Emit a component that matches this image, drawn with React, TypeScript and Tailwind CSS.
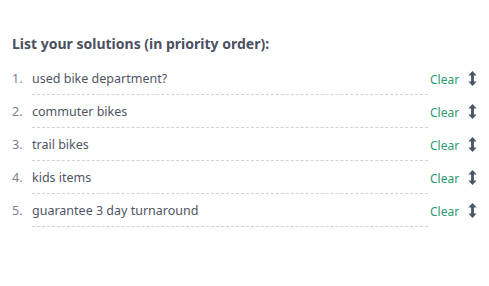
import React from "react";

const items = [
  "used bike department?",
  "commuter bikes",
  "trail bikes",
  "kids items",
  "guarantee 3 day turnaround",
];

function UpDown() {
  return (
    <svg width="9" height="15" viewBox="0 0 9 15" className="block">
      <path d="M4.5 0 L8.6 4.6 L5.9 4.6 L5.9 10.4 L8.6 10.4 L4.5 15 L0.4 10.4 L3.1 10.4 L3.1 4.6 L0.4 4.6 Z" fill="#4b5563" />
    </svg>
  );
}

export default function App() {
  return (
    <div className="w-[489px] h-[286px] bg-white pl-3 pt-[35px]" style={{ fontFamily: "'Noto Sans', sans-serif" }}>
      <h2 className="text-[14px] font-bold text-[#4b5060] leading-[18px]">
        List your solutions (in priority order):
      </h2>
      <div className="mt-[9px] flex flex-col">
        {items.map((t, i) => (
          <div key={i} className="flex items-center h-[33px]">
            <span className="w-[20px] pt-[2px] text-[12.5px] text-[#7b8190]">{i + 1}.</span>
            <div className="w-[396px] h-[33px] flex items-center pt-[3px] border-b border-dashed border-[#cfd3d9] text-[12.5px] text-[#4f5563]">
              {t}
            </div>
            <span className="ml-[2px] pt-[2px] text-[12px] text-[#2d9a6d] w-[38px]">Clear</span>
            <UpDown />
          </div>
        ))}
      </div>
    </div>
  );
}
